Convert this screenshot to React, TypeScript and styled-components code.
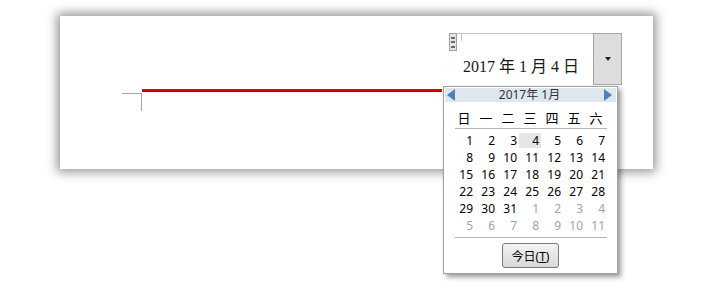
import React from 'react';
import styled, { createGlobalStyle } from 'styled-components';

const GlobalStyle = createGlobalStyle`
  html, body {
    margin: 0;
    padding: 0;
    background: #ffffff;
  }
  body {
    font-family: "Noto Sans", "Noto Sans CJK TC", sans-serif;
  }
`;

const Screen = styled.div`
  width: 710px;
  height: 297px;
  padding: 16px 0 0 60px;
  box-sizing: border-box;
  overflow: hidden;
`;

const Page = styled.div`
  position: relative;
  width: 593px;
  height: 153px;
  box-sizing: border-box;
  padding-top: 17px;
  background: #ffffff;
  box-shadow: 0 0 10px 3px rgba(0, 0, 0, 0.42);
`;

const ControlRow = styled.div`
  display: flex;
  justify-content: flex-end;
  padding-right: 31px;
`;

const Control = styled.div`
  position: relative;
  display: flex;
  width: 175px;
  height: 53px;
`;

const Handle = styled.div`
  margin-left: 2px;
  width: 6px;
  height: 16px;
  border: 1px solid #a0a0a0;
  background: #e4e4e4;
  display: flex;
  flex-direction: column;
  align-items: center;
  justify-content: space-evenly;

  span {
    width: 4px;
    height: 2px;
    background: #6a6a6a;
  }
`;

const TextArea = styled.div`
  position: relative;
  flex: 1;
  display: flex;
  align-items: flex-end;
  padding: 0 0 9px 6px;
  border-top: 1px solid #c4c4c4;
  font-family: "Liberation Serif", "Noto Sans CJK TC", serif;
  font-size: 16px;
  line-height: 20px;
  color: #1a1a1a;
  white-space: nowrap;

  &::before {
    content: '';
    position: absolute;
    left: 4px;
    top: 0;
    width: 1px;
    height: 7px;
    background: #c4c4c4;
  }
`;

const DropButton = styled.div`
  width: 27px;
  height: 50px;
  border: 1px solid #a6a6a6;
  background: #dddddd;
  display: flex;
  align-items: center;
  justify-content: center;

  &::after {
    content: '';
    border-left: 3.5px solid transparent;
    border-right: 3.5px solid transparent;
    border-top: 4px solid #222222;
  }
`;

const MarkRow = styled.div`
  display: flex;
  align-items: flex-start;
  margin: 3px 0 0 62px;
`;

const CropMark = styled.div`
  width: 19px;
  height: 17px;
  margin-top: 4px;
  border-top: 1px solid #a8a8a8;
  border-right: 1px solid #a8a8a8;
`;

const RedLine = styled.div`
  width: 300px;
  height: 2px;
  background: #e60000;
  border-bottom: 1px solid #a80000;
`;

const Popup = styled.div`
  position: absolute;
  left: -4px;
  top: 53px;
  width: 175px;
  box-sizing: border-box;
  padding: 1px 0 5px;
  border: 1px solid #a0a0a0;
  background: #ffffff;
  box-shadow: 3px 3px 5px rgba(0, 0, 0, 0.4);
  font-size: 12px;
  color: #000000;
`;

const Header = styled.div`
  display: flex;
  align-items: center;
  justify-content: space-between;
  height: 14px;
  margin: 0 1px;
  background: #e0e6ee;
  color: #333333;
  font-size: 12px;
  line-height: 14px;
`;

const Arrow = styled.div<{ $dir: 'left' | 'right' }>`
  width: 0;
  height: 0;
  border-top: 6px solid transparent;
  border-bottom: 6px solid transparent;
  ${({ $dir }) =>
    $dir === 'left'
      ? 'border-right: 8px solid #4f80b8; margin-left: 2px;'
      : 'border-left: 8px solid #4f80b8; margin-right: 4px;'}
`;

const Grid = styled.div`
  display: grid;
  grid-template-columns: repeat(7, 22px);
  margin-left: 9px;
`;

const DayNames = styled(Grid)`
  margin-top: 4px;
  height: 22px;
  align-items: center;
  font-size: 13px;
`;

const DayName = styled.div`
  text-align: center;
`;

const Dates = styled(Grid)`
  margin-top: 4px;
  grid-auto-rows: 17px;
`;

const DateCell = styled.div<{ $muted?: boolean; $today?: boolean }>`
  height: 15px;
  line-height: 15px;
  text-align: right;
  padding-right: 2px;
  color: ${({ $muted }) => ($muted ? '#a3a3a3' : '#000000')};
  background: ${({ $today }) => ($today ? '#e6e6e6' : 'transparent')};
`;

const Rule = styled.div<{ $gap: number }>`
  height: 1px;
  margin: ${({ $gap }) => $gap}px 10px 0 11px;
  background: #b4b4b4;
`;

const Footer = styled.div`
  display: flex;
  justify-content: center;
  margin-top: 5px;
`;

const TodayButton = styled.button`
  width: 57px;
  height: 25px;
  padding: 0;
  border: 1px solid #7a7a7a;
  border-radius: 3px;
  background: linear-gradient(#f4f4f4, #e6e6e6 50%, #d9d9d9);
  font-family: "Noto Sans", "Noto Sans CJK TC", sans-serif;
  font-size: 12px;
  color: #000000;

  u {
    text-decoration: underline;
  }
`;

const dayNames = ['日', '一', '二', '三', '四', '五', '六'];

const dates: { n: number; muted?: boolean }[] = [
  ...Array.from({ length: 31 }, (_, i) => ({ n: i + 1 })),
  ...Array.from({ length: 11 }, (_, i) => ({ n: i + 1, muted: true })),
];

const App: React.FC = () => {
  return (
    <>
      <GlobalStyle />
      <Screen>
        <Page>
          <ControlRow>
            <Control>
              <Handle>
                <span />
                <span />
                <span />
              </Handle>
              <TextArea>2017 年 1 月 4 日</TextArea>
              <DropButton />
              <Popup>
                <Header>
                  <Arrow $dir="left" />
                  <span>2017年 1月</span>
                  <Arrow $dir="right" />
                </Header>
                <DayNames>
                  {dayNames.map((d) => (
                    <DayName key={d}>{d}</DayName>
                  ))}
                </DayNames>
                <Rule $gap={0} />
                <Dates>
                  {dates.map((d, i) => (
                    <DateCell key={i} $muted={d.muted} $today={!d.muted && d.n === 4}>
                      {d.n}
                    </DateCell>
                  ))}
                </Dates>
                <Rule $gap={2} />
                <Footer>
                  <TodayButton>
                    今日(<u>T</u>)
                  </TodayButton>
                </Footer>
              </Popup>
            </Control>
          </ControlRow>
          <MarkRow>
            <CropMark />
            <RedLine />
          </MarkRow>
        </Page>
      </Screen>
    </>
  );
};

export default App;
